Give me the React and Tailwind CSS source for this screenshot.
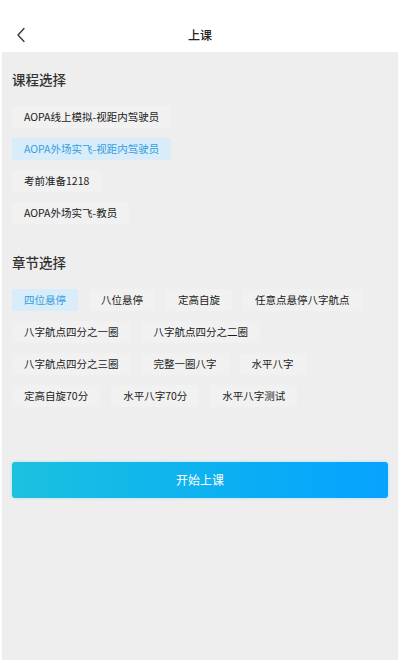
import React, { useState } from 'react';

const courses = [
    'AOPA线上模拟-视距内驾驶员',
    'AOPA外场实飞-视距内驾驶员',
    '考前准备1218',
    'AOPA外场实飞-教员',
];

const chapters = [
    ['四位悬停', '八位悬停', '定高自旋', '任意点悬停八字航点'],
    ['八字航点四分之一圈', '八字航点四分之二圈'],
    ['八字航点四分之三圈', '完整一圈八字', '水平八字'],
    ['定高自旋70分', '水平八字70分', '水平八字测试'],
];

const Chip = ({ label, active, onClick }) => (
    <button
        type="button"
        onClick={onClick}
        className={
            active
                ? 'h-[22px] px-[12px] rounded-[2px] bg-[#d9ecf9] text-[#349ee0] text-[10.5px] leading-[22px] whitespace-nowrap'
                : 'h-[22px] px-[12px] rounded-[2px] bg-[#f1f1f1] text-[#1a1a1a] text-[10.5px] leading-[22px] whitespace-nowrap'
        }
    >
        {label}
    </button>
);

const App = () => {
    const [course, setCourse] = useState(1);
    const [chapter, setChapter] = useState('四位悬停');

    return (
        <div
            className="w-[400px] h-[660px] bg-white flex flex-col overflow-hidden"
            style={{ fontFamily: '"Noto Sans CJK SC", "Noto Sans", sans-serif' }}
        >
            {/* header */}
            <div className="h-[52px] pt-[18px] shrink-0">
                <div className="relative h-[34px] flex items-center justify-center">
                    <svg className="absolute left-[15px] top-[9px]" width="12" height="16" viewBox="0 0 12 16" fill="none">
                        <polyline points="9,1.5 3,8 9,14.5" stroke="#333333" strokeWidth="1.3" strokeLinecap="round" strokeLinejoin="round" />
                    </svg>
                    <span className="text-[12px] font-medium text-[#222222]">上课</span>
                </div>
            </div>

            {/* body */}
            <div className="flex-1 mx-[2px] bg-[#eeeeee] px-[10px] pt-[17px]">
                <div className="text-[13.5px] leading-[20px] font-medium text-[#333333]">课程选择</div>
                <div className="mt-[17px] flex flex-col items-start gap-[10px]">
                    {courses.map((c, i) => (
                        <Chip key={c} label={c} active={course === i} onClick={() => setCourse(i)} />
                    ))}
                </div>

                <div className="mt-[28px] text-[13.5px] leading-[20px] font-medium text-[#333333]">章节选择</div>
                <div className="mt-[17px] flex flex-col gap-[10px]">
                    {chapters.map((row, r) => (
                        <div key={r} className="flex gap-[11px]">
                            {row.map((c) => (
                                <Chip key={c} label={c} active={chapter === c} onClick={() => setChapter(c)} />
                            ))}
                        </div>
                    ))}
                </div>

                <button
                    type="button"
                    className="mt-[55px] w-full h-[36px] rounded-[3px] bg-gradient-to-r from-[#1cc1df] to-[#08a2ff] text-white text-[12px] shadow-[0_0_3px_rgba(40,190,255,0.35)]"
                >
                    开始上课
                </button>
            </div>
        </div>
    );
};

export default App;
